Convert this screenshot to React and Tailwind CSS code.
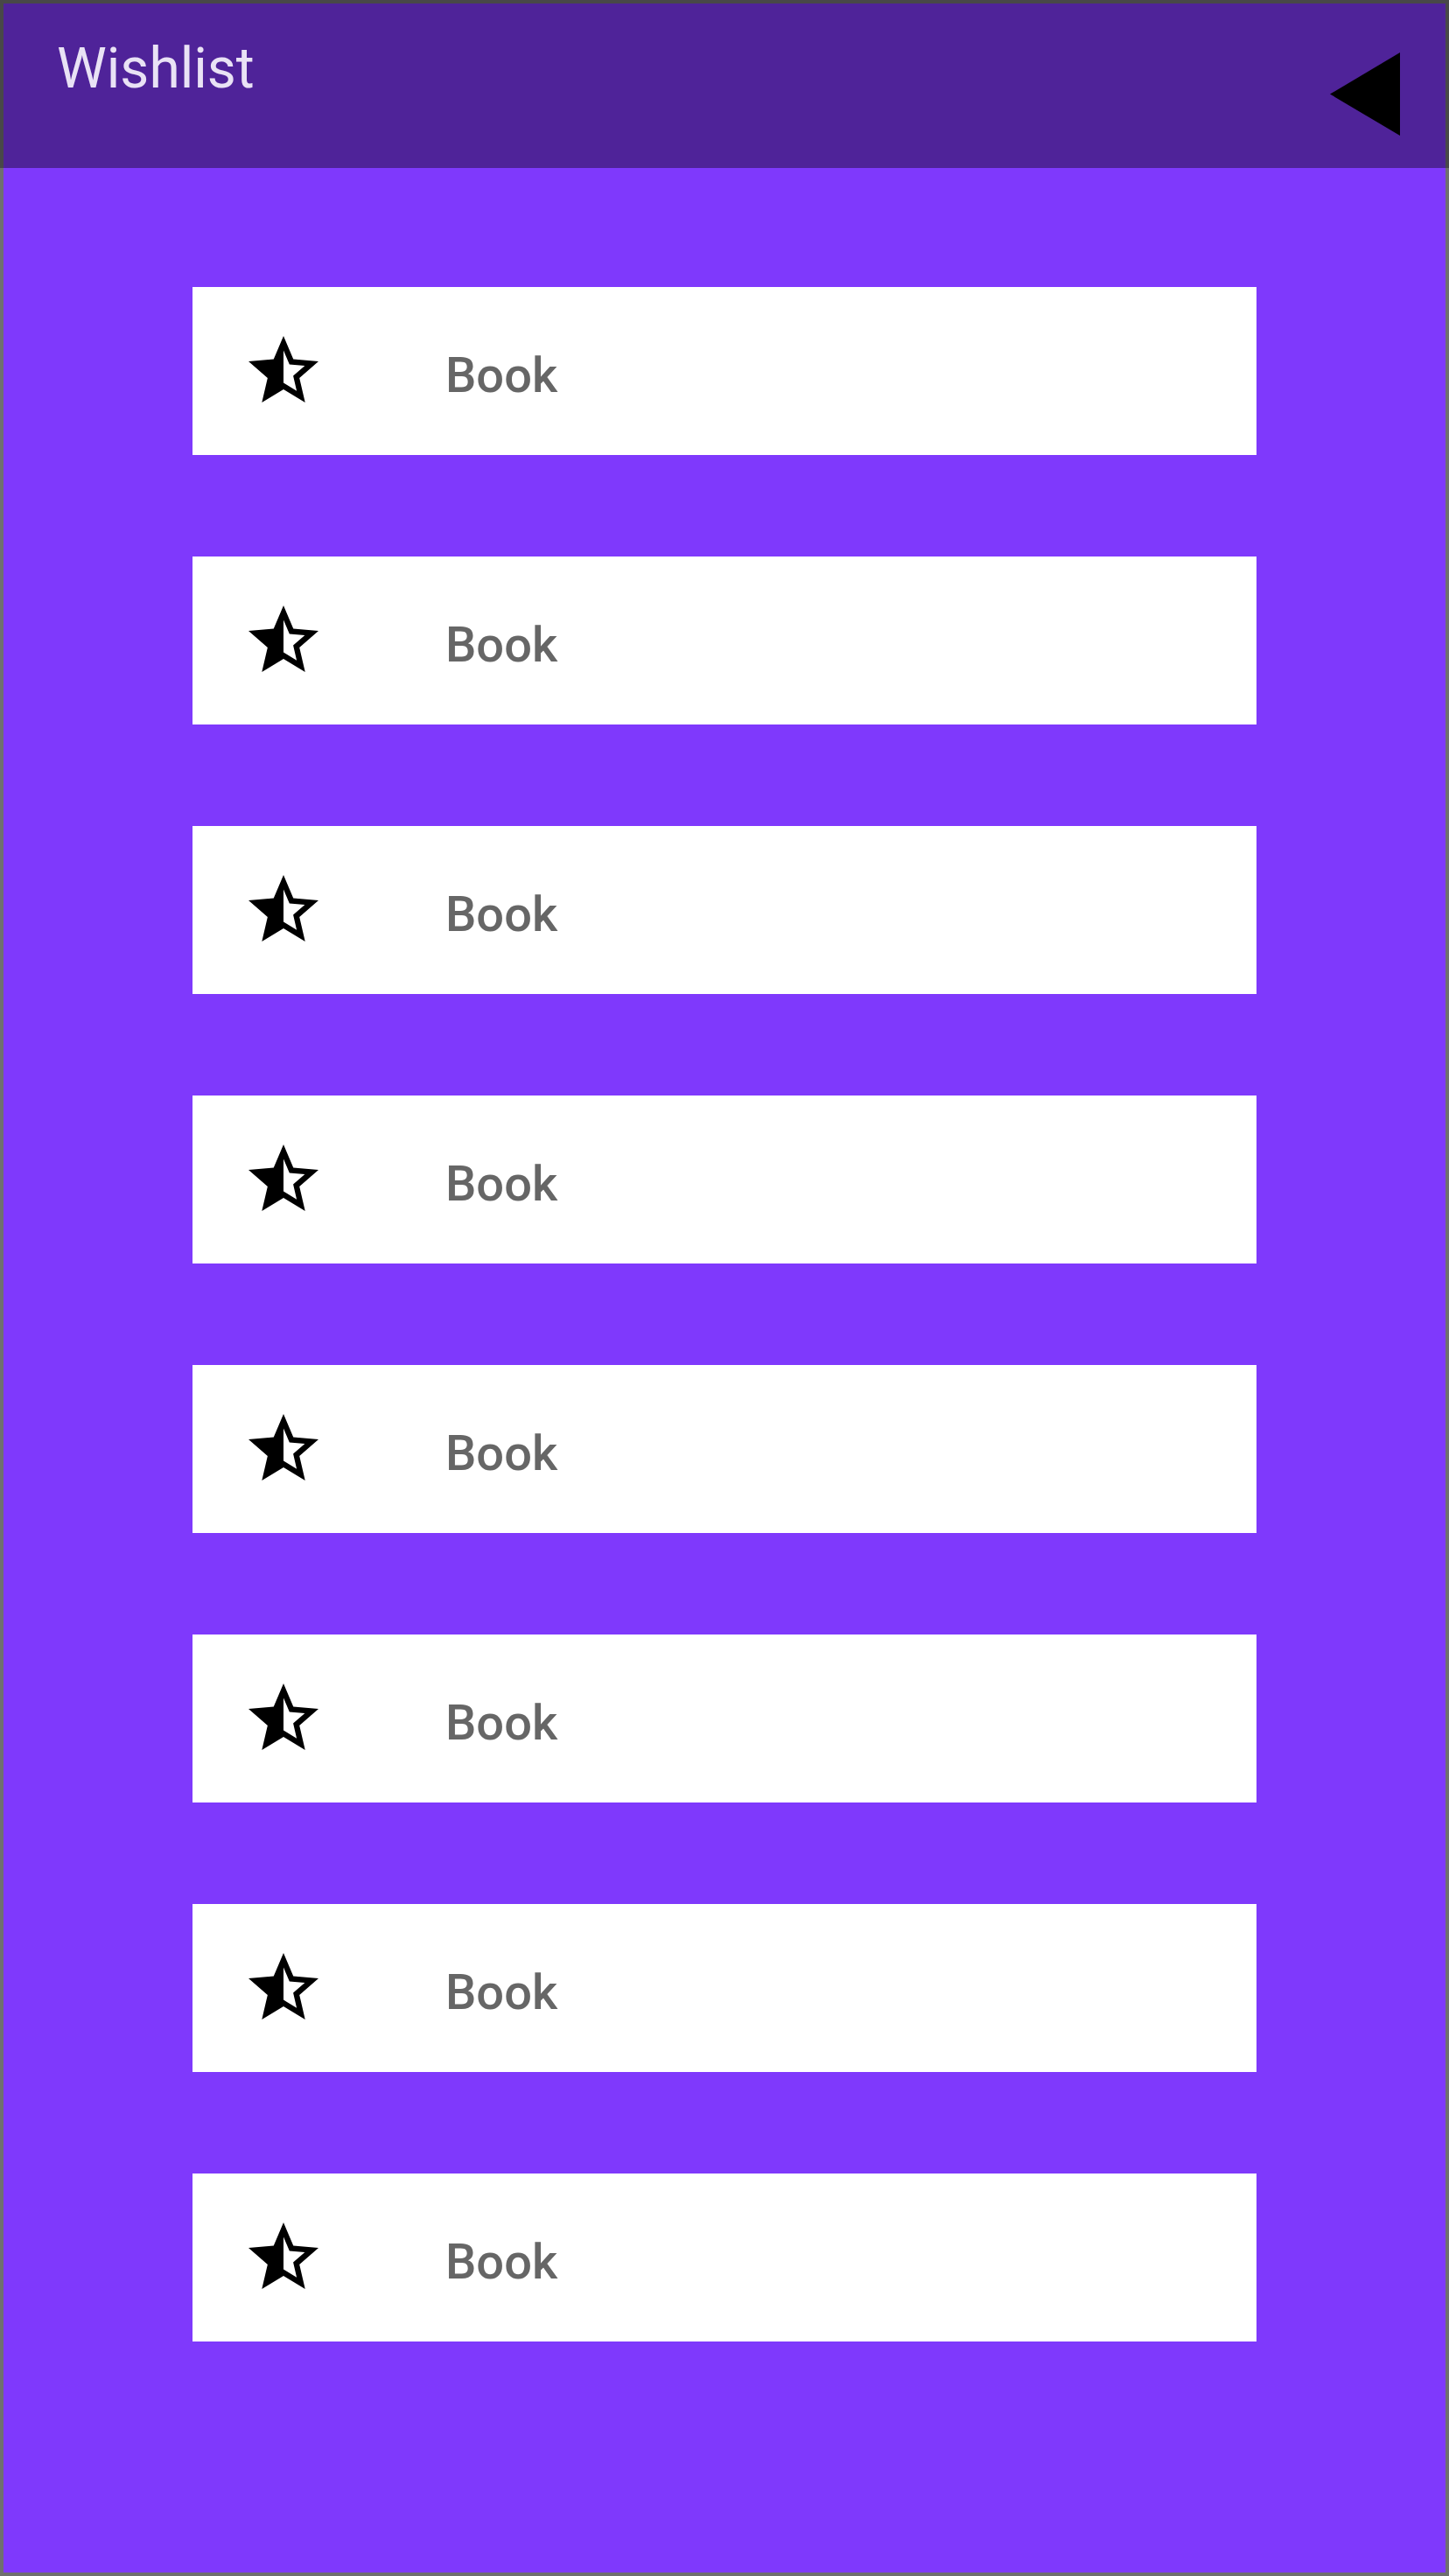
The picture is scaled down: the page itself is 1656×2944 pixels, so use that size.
import React from 'react';

const books = Array.from({ length: 8 }, (_, i) => ({ id: i, title: 'Book' }));

const StarHalf = () => (
  <svg viewBox="0 0 24 24" className="w-[96px] h-[96px] shrink-0" fill="#000">
    <path d="M22 9.24l-7.19-.62L12 2 9.19 8.63 2 9.24l5.46 4.73L5.82 21 12 17.27 18.18 21l-1.63-7.03L22 9.24zM12 15.4V6.1l1.71 4.04 4.38.38-3.32 2.88 1 4.28L12 15.4z" />
  </svg>
);

const BackArrow = () => (
  <svg viewBox="0 0 80 95" className="w-[80px] h-[95px] shrink-0">
    <polygon points="80,0 80,95 0,47.5" fill="#000" />
  </svg>
);

const App = () => {
  return (
    <div className="w-[1656px] h-[2944px] flex flex-col" style={{ fontFamily: 'Roboto, "Noto Sans", sans-serif' }}>
      <header className="h-[192px] shrink-0 bg-[#4f2399] border-t-4 border-x-4 border-[#484848] flex justify-between items-start pl-[61px] pr-[52px]">
        <h1 className="pt-[37px] text-[64px] leading-[75px] text-[#e9e2f5] font-normal">Wishlist</h1>
        <div className="mt-[56px]">
          <BackArrow />
        </div>
      </header>

      <main className="flex-1 bg-[#7f39fc] border-x-4 border-b-4 border-[#6f6f6f] pt-[136px]">
        <div className="w-[1216px] mx-auto flex flex-col gap-[116px]">
          {books.map((book) => (
            <div key={book.id} className="h-[192px] bg-white flex items-center pl-[56px] gap-[137px]">
              <StarHalf />
              <span className="text-[56px] leading-none font-medium text-[#666666] mt-[10px]">{book.title}</span>
            </div>
          ))}
        </div>
      </main>
    </div>
  );
};

export default App;
